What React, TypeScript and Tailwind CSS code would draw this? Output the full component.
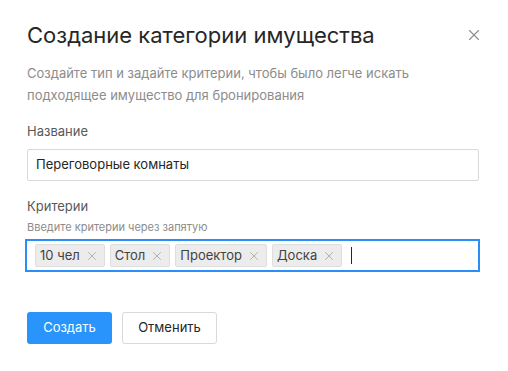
import { X } from "lucide-react";

const tags = ["10 чел", "Стол", "Проектор", "Доска"];

export default function App() {
  return (
    <div
      className="w-[508px] h-[371px] bg-white px-[27px] pt-[19px] text-[#262626]"
      style={{ fontFamily: "Inter, 'Noto Sans', sans-serif" }}
    >
      {/* Header */}
      <div className="flex items-center justify-between h-[32px]">
        <h1 className="text-[22px] leading-[32px] font-normal text-[#262626]">
          Создание категории имущества
        </h1>
        <button type="button" className="mr-[-2px] text-[#8c8c8c]">
          <X size={18} strokeWidth={1.5} />
        </button>
      </div>

      <p className="mt-[11px] text-[13px] leading-[22px] text-[#8c8c8c]">
        Создайте тип и задайте критерии, чтобы было легче искать
        <br />
        подходящее имущество для бронирования
      </p>

      {/* Name */}
      <div className="mt-[15px] text-[13px] leading-[20px] text-[#595959]">Название</div>
      <div className="mt-[8px] h-[32px] w-[452px] border border-[#d9d9d9] rounded-[2px] flex items-center px-[8px] text-[13px] text-[#262626]">
        Переговорные комнаты
      </div>

      {/* Criteria */}
      <div className="mt-[15px] text-[13px] leading-[20px] text-[#595959]">Критерии</div>
      <div className="mt-[3px] text-[11px] leading-[16px] text-[#8c8c8c]">
        Введите критерии через запятую
      </div>
      <div className="mt-[4px] ml-[-2px] h-[33px] w-[455px] border-2 border-[#2a8ef8] flex items-center gap-[5px] px-[8px]">
        {tags.map((t) => (
          <span
            key={t}
            className="h-[23px] flex items-center gap-[5px] pl-[4px] pr-[5px] bg-[#ececec] border border-[#dedede] rounded-[2px] text-[13px] text-[#434343]"
          >
            {t}
            <X size={14} strokeWidth={1.2} className="text-[#9a9a9a]" />
          </span>
        ))}
        <span className="ml-[4px] w-[1px] h-[17px] bg-[#262626]" />
      </div>

      {/* Buttons */}
      <div className="mt-[40px] flex gap-[10px]">
        <button
          type="button"
          className="h-[32px] w-[85px] rounded-[3px] bg-[#2894fc] text-white text-[13px]"
        >
          Создать
        </button>
        <button
          type="button"
          className="h-[32px] w-[95px] rounded-[3px] border border-[#d9d9d9] bg-white text-[#262626] text-[13px]"
        >
          Отменить
        </button>
      </div>
    </div>
  );
}
